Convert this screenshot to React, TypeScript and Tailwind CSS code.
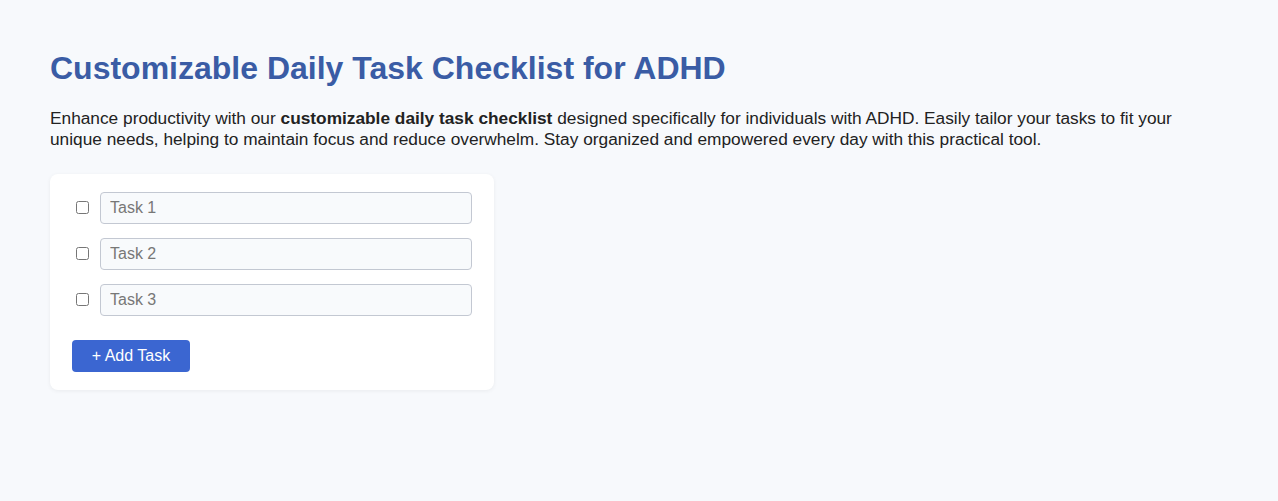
import { useState } from 'react';

export default function App() {
  const [tasks, setTasks] = useState<string[]>(['', '', '']);

  const addTask = () => setTasks(prev => [...prev, '']);

  return (
    <div className="min-h-[501px] bg-[#f7f9fc] px-[50px] pt-[50px] pb-10 text-[#222] font-['Liberation_Sans',Arial,sans-serif]">
      <h1 className="text-[32px] font-bold leading-[1.15] text-[#3a5ca5]">
        Customizable Daily Task Checklist for ADHD
      </h1>
      <p className="mt-[21px] text-[17.3px] leading-[21px]">
        Enhance productivity with our <strong>customizable daily task checklist</strong> designed specifically for individuals with ADHD. Easily tailor your tasks to fit your unique needs, helping to maintain focus and reduce overwhelm. Stay organized and empowered every day with this practical tool.
      </p>

      {/* Checklist card */}
      <div className="mt-[24px] w-[444px] rounded-lg bg-white px-[22px] pt-[18px] pb-[18px] shadow-[0_1px_4px_rgba(0,0,0,0.06)]">
        <div className="flex flex-col gap-[14px]">
          {tasks.map((t, i) => (
            <div key={i} className="flex items-center">
              <input type="checkbox" className="ml-[4px] mr-[11px] h-[13px] w-[13px]" />
              <input
                type="text"
                value={t}
                onChange={(e) => setTasks(prev => prev.map((v, j) => (j === i ? e.target.value : v)))}
                placeholder={`Task ${i + 1}`}
                className="h-[32px] flex-1 rounded-[4px] border border-[#c3c8d2] bg-[#f8fafc] px-[9px] text-base text-[#222] placeholder:text-[#777] focus:outline-none"
              />
            </div>
          ))}
        </div>
        <button
          onClick={addTask}
          className="mt-[24px] h-[32px] w-[118px] rounded-[4px] bg-[#3b66d1] text-base text-white"
        >
          + Add Task
        </button>
      </div>
    </div>
  );
}
